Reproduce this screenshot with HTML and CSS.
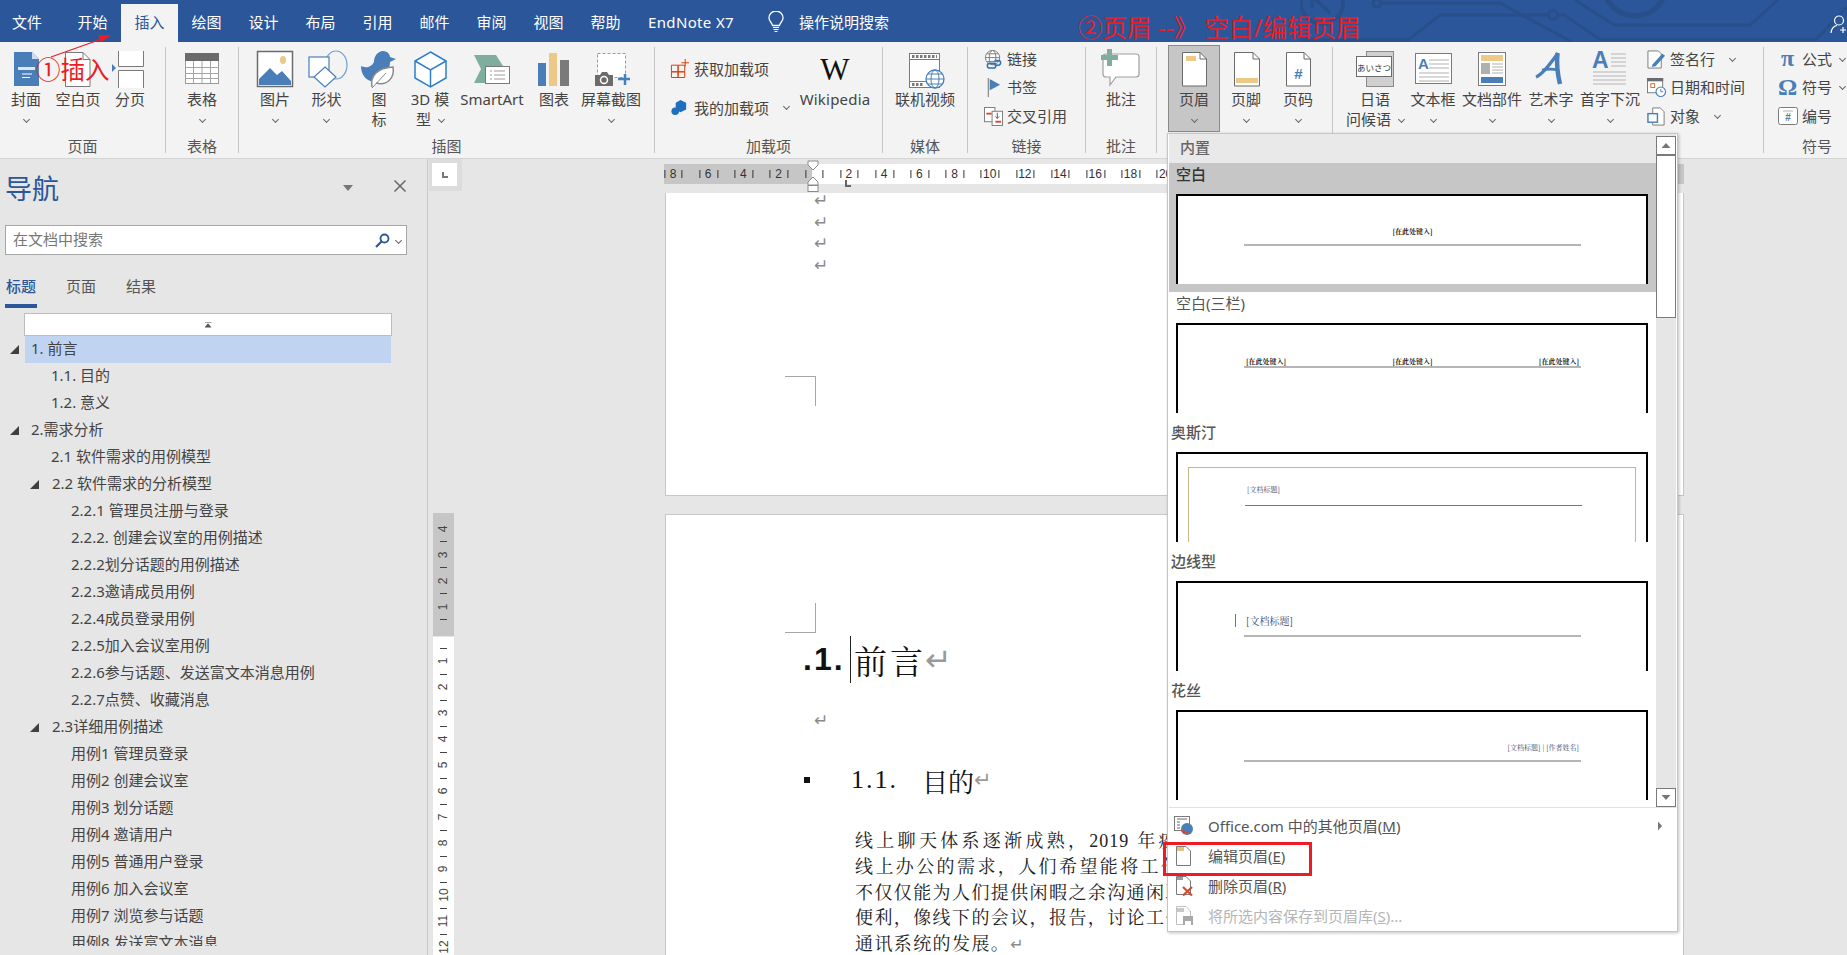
FILE: index.html
```html
<!DOCTYPE html>
<html lang="zh-CN">
<head>
<meta charset="utf-8">
<title>Word</title>
<link rel="stylesheet" href="styles.css">
</head>
<body>
<header class="titlebar">
  <svg class="circuit" viewBox="0 0 547 42"><g fill="none" stroke="#284f89" stroke-width="3"><circle cx="22" cy="3" r="21" stroke-width="4"/><path d="M30 13L14 -2M12 8V-2H22" stroke-width="3.500"/><circle cx="77" cy="3" r="4"/><path d="M81 3H200L272 42"/><path d="M0 40H108L140 15H249"/><circle cx="253" cy="15" r="4.500"/><path d="M258 15H264L300 39.500H516L547 7"/><path d="M275 0L314 25H450L478 0"/><circle cx="335" cy="-15" r="31" stroke-width="5.500"/></g></svg>
  <nav class="tabs">
    <div class="tab tab-file">文件</div><div class="tab">开始</div><div class="tab tab-active">插入</div><div class="tab">绘图</div><div class="tab">设计</div><div class="tab">布局</div><div class="tab">引用</div><div class="tab">邮件</div><div class="tab">审阅</div><div class="tab">视图</div><div class="tab">帮助</div>
    <div class="tab tab-endnote">EndNote X7</div>
    <svg class="bulb" viewBox="0 0 18 22"><path d="M5.500 14.500C5 11.500 2 10.500 2 7A7 7 0 0 1 16 7C16 10.500 13 11.500 12.500 14.500Z" fill="none" stroke="#fff" stroke-width="1.300"/><path d="M6 16.500H12M6.500 18.500H11.500M7.500 20.500H10.500" stroke="#fff" stroke-width="1.200"/></svg>
    <div class="tell">操作说明搜索</div>
  </nav>
  <svg class="user" viewBox="0 0 18 19"><circle cx="9" cy="5.500" r="4.500" fill="none" stroke="#fff" stroke-width="1.200"/><path d="M1 18C1.500 13 4 11 7 10.500M13 12V18M10 15H16" fill="none" stroke="#fff" stroke-width="1.200"/></svg>
</header>

<section class="ribbon">
  <div class="group g-page">
    <div class="gbody pad-0">
      <div class="big w52"><svg viewBox="0 0 44 40"><path d="M10 2H28L35 9V36H10Z" fill="#4a7eb9"/><path d="M28 2V9H35Z" fill="#cfdcec"/><path d="M14 17H31V20H14Z" fill="#dfe8f2"/><path d="M18 24H28M18 27.500H26" stroke="#fff"/></svg><div class="lbl">封面<br><span class="chev"></span></div></div>
      <div class="big w52"><svg viewBox="0 0 44 40"><path d="M9.500 2.500H27L34 9.500V36.500H9.500Z" fill="#fff" stroke="#7a7a7a"/><path d="M27 2.500V9.500H34" fill="none" stroke="#7a7a7a"/></svg><div class="lbl">空白页</div></div>
      <div class="big w52"><svg viewBox="0 0 44 40"><path d="M10.500 1V16.500H35.500V1" fill="#fff" stroke="#7a7a7a"/><path d="M10.500 38V20.500H35.500V38" fill="#fff" stroke="#7a7a7a"/><path d="M4 14L8 18L4 22Z" fill="#4a7eb9"/></svg><div class="lbl">分页</div></div>
    </div>
    <div class="glabel">页面</div>
  </div>
  <div class="group g-table">
    <div class="gbody">
      <div class="big w-full"><svg viewBox="0 0 44 40"><rect x="5.500" y="3.500" width="33" height="30" fill="#fff" stroke="#9a9a9a"/><rect x="5" y="3" width="34" height="8" fill="#6b6b6b"/><path d="M5 17.500H39M5 23.500H39M5 28.500H39M13.500 11V33M22 11V33M30.500 11V33" stroke="#a5a5a5"/></svg><div class="lbl">表格<br><span class="chev"></span></div></div>
    </div>
    <div class="glabel">表格</div>
  </div>
  <div class="group g-illus">
    <div class="gbody pad-10">
      <div class="big w52"><svg viewBox="0 0 44 40"><rect x="4.500" y="1.500" width="35" height="35" fill="#fff" stroke="#6b6b6b" stroke-width="1.500"/><path d="M6 35V29L17 18L24 25L29 21L38 31V35Z" fill="#4a7eb9"/><ellipse cx="30" cy="10" rx="3" ry="4" fill="#edc987"/></svg><div class="lbl">图片<br><span class="chev"></span></div></div>
      <div class="big w51"><svg viewBox="0 0 44 40"><ellipse cx="31" cy="15" rx="11" ry="14" fill="none" stroke="#6f9fd0" stroke-width="1.200"/><rect x="4" y="7" width="20" height="20" fill="#fff" stroke="#4a7eb9" stroke-width="1.200"/><path d="M20 17L31 27L20 37L9 27Z" fill="#fff" stroke="#4a7eb9" stroke-width="1.200"/></svg><div class="lbl">形状<br><span class="chev"></span></div></div>
      <div class="big w54"><svg viewBox="0 0 44 40"><path d="M4 16C8 18 14 18 17 12C17 6 21 1 26 1C31 1 33 5 33 7L39 9L33 12C33 18 30 24 24 26L16 32C8 30 4 24 4 16Z" fill="#4a7eb9"/><path d="M15 37C13 26 20 18 36 17C38 28 30 36 19 33" fill="#fff" stroke="#8a8a8a" stroke-width="1.500"/><path d="M15 38L29 23" stroke="#8a8a8a"/></svg><div class="lbl">图<br>标</div></div>
      <div class="big w48"><svg viewBox="0 0 44 40"><path d="M22.500 2L38 11V28L22.500 37L7 28V11Z" fill="#fff" stroke="#2f7fc8" stroke-width="1.500"/><path d="M7 11L22.500 20L38 11M22.500 20V37" fill="none" stroke="#2f7fc8" stroke-width="1.500"/></svg><div class="lbl">3D 模<br>型<span class="chev chev-in"></span></div></div>
      <div class="big w76"><svg viewBox="0 0 44 40"><path d="M4 5H26L33 16H15V33H4L11 19Z" fill="#7fae9f"/><rect x="15.500" y="16.500" width="24" height="17" fill="#fff" stroke="#7a7a7a"/><path d="M20 21H22M24 21H35M20 25H22M24 25H35M20 29H22M24 29H35" stroke="#9a9a9a"/></svg><div class="lbl">SmartArt</div></div>
      <div class="big w48"><svg viewBox="0 0 44 40"><rect x="6" y="13" width="8" height="23" fill="#4a7eb9"/><rect x="17" y="3" width="8" height="33" fill="#edc987"/><rect x="28" y="10" width="9" height="26" fill="#7a7a7a"/></svg><div class="lbl">图表</div></div>
      <div class="big w66"><svg viewBox="0 0 44 40"><rect x="8.500" y="3.500" width="28" height="24" fill="#fff" stroke="#9a9a9a" stroke-dasharray="3 2"/><path d="M6 25H11L13 22H18L20 25H24V36H6Z" fill="#6b6b6b"/><circle cx="15" cy="30" r="3.500" fill="none" stroke="#fff" stroke-width="1.500"/><path d="M29 29H41M36 24V35" stroke="#4a7eb9" stroke-width="2.500"/></svg><div class="lbl">屏幕截图<br><span class="chev"></span></div></div>
    </div>
    <div class="glabel">插图</div>
  </div>
  <div class="group g-addin">
    <div class="gbody pad-15">
      <div class="addin-col">
        <div class="addin-row"><svg class="sm" viewBox="0 0 20 20"><path d="M1.500 6.500H8.500V13.500H1.500ZM8.500 6.500H15.500V13.500H8.500ZM1.500 13.500H8.500V19.500H1.500ZM8.500 13.500H15.500V19.500H8.500Z" fill="none" stroke="#d83b01"/><path d="M16 0V8M12 4H20" stroke="#d83b01"/></svg><span>获取加载项</span></div>
        <div class="addin-row"><svg class="sm" viewBox="0 0 20 20"><path d="M11 2L17 5V12L11 15L6 12V5Z" fill="#1f6fc1"/><circle cx="5.500" cy="14" r="4" fill="#1f6fc1"/></svg><span>我的加载项</span><span class="chev chev-side"></span></div>
      </div>
      <div class="big w72"><div class="wiki">W</div><div class="lbl lbl-wiki">Wikipedia</div></div>
    </div>
    <div class="glabel">加载项</div>
  </div>
  <div class="group g-media">
    <div class="gbody">
      <div class="big w-full"><svg viewBox="0 0 44 40"><rect x="6.500" y="3.500" width="30" height="34" fill="#fff" stroke="#7a7a7a"/><path d="M6.500 9.500H36.500M6.500 31.500H36.500" stroke="#7a7a7a"/><path d="M9 6.500H34M9 34.500H20" stroke="#7a7a7a" stroke-width="3" stroke-dasharray="2.500 1.500"/><circle cx="32" cy="29" r="9" fill="#fff" stroke="#4a7eb9" stroke-width="1.300"/><ellipse cx="32" cy="29" rx="4" ry="9" fill="none" stroke="#4a7eb9"/><path d="M23 29H41M25 24H39M25 34H39" stroke="#4a7eb9"/></svg><div class="lbl">联机视频</div></div>
    </div>
    <div class="glabel">媒体</div>
  </div>
  <div class="group g-links">
    <div class="gbody pad-16">
      <div class="smalls">
        <div class="srow"><svg class="sm" viewBox="0 0 20 20"><circle cx="9" cy="8" r="7.500" fill="#fff" stroke="#7a7a7a"/><ellipse cx="9" cy="8" rx="3.500" ry="7.500" fill="none" stroke="#7a7a7a"/><path d="M1.500 8H16.500M3 4H15M3 12H15" stroke="#7a7a7a"/><path d="M6 14H10A2.500 2.500 0 0 1 10 19H6A2.500 2.500 0 0 1 6 14ZM11 11H15A2.500 2.500 0 0 1 15 16H11" fill="none" stroke="#2e75b6" stroke-width="1.600"/></svg><span>链接</span></div>
        <div class="srow"><svg class="sm" viewBox="0 0 20 20"><path d="M4.500 0V20" stroke="#6b6b6b"/><path d="M6 1L17 7L6 13Z" fill="#4a7eb9"/></svg><span>书签</span></div>
        <div class="srow"><svg class="sm" viewBox="0 0 20 20"><rect x="0.500" y="0.500" width="11" height="15" fill="#fff" stroke="#7a7a7a"/><rect x="8.500" y="4.500" width="11" height="15" fill="#fff" stroke="#7a7a7a"/><path d="M2.500 7H8" stroke="#d8482a" stroke-width="2"/><path d="M12 15.500H18" stroke="#d8482a" stroke-width="2"/><path d="M14 6V12M12 10L14 12L16 10" fill="none" stroke="#555"/></svg><span>交叉引用</span></div>
      </div>
    </div>
    <div class="glabel">链接</div>
  </div>
  <div class="group g-comment">
    <div class="gbody">
      <div class="big w-full"><svg viewBox="0 0 44 40"><path d="M7 4H37Q40 4 40 7V24Q40 27 37 27H17L11 35V27H7Q4 27 4 24V7Q4 4 7 4Z" fill="#fff" stroke="#a0a0a0" stroke-width="1.200"/><path d="M10.500 -1V16M2 7.500H19" stroke="#7fae9f" stroke-width="5"/></svg><div class="lbl">批注</div></div>
    </div>
    <div class="glabel">批注</div>
  </div>
  <div class="group g-header">
    <div class="gbody pad-11">
      <div class="big w52 big-active"><svg viewBox="0 0 44 40"><path d="M10.500 2.500H28L34.500 9V36H10.500Z" fill="#fff" stroke="#6b6b6b"/><path d="M28 2.500V9H34.500" fill="none" stroke="#6b6b6b"/><rect x="14" y="6" width="10" height="5" fill="#edc987"/></svg><div class="lbl">页眉<br><span class="chev"></span></div></div>
      <div class="big w52"><svg viewBox="0 0 44 40"><path d="M10.500 2.500H29L35.500 9V36H10.500Z" fill="#fff" stroke="#6b6b6b"/><path d="M29 2.500V9H35.500" fill="none" stroke="#6b6b6b"/><rect x="12" y="28" width="22" height="5" fill="#edc987"/></svg><div class="lbl">页脚<br><span class="chev"></span></div></div>
      <div class="big w52"><svg viewBox="0 0 44 40"><path d="M10.500 2.500H28L34.500 9V36H10.500Z" fill="#fff" stroke="#6b6b6b"/><path d="M28 2.500V9H34.500" fill="none" stroke="#6b6b6b"/><text x="22.500" y="29" class="ic-hash">#</text></svg><div class="lbl">页码<br><span class="chev"></span></div></div>
    </div>
  </div>
  <div class="group g-text">
    <div class="gbody pad-13">
      <div class="big w58"><svg viewBox="0 0 44 40"><rect x="13.500" y="1.500" width="27" height="35" fill="#d0d0d0" stroke="#8a8a8a"/><rect x="3.500" y="6.500" width="35" height="20" fill="#fff" stroke="#6b6b6b"/><text x="21" y="20.500" class="ic-jp">あいさつ</text></svg><div class="lbl">日语<br>问候语<span class="chev chev-in"></span></div></div>
      <div class="big w58"><svg viewBox="0 0 44 40"><rect x="4.500" y="3.500" width="36" height="30" fill="#fff" stroke="#7a7a7a"/><text x="7" y="19" class="ic-a">A</text><path d="M18 10H38M18 14H38M18 18H38M8 23H38M8 27H38M8 31H38" stroke="#b0b0b0"/></svg><div class="lbl">文本框<br><span class="chev"></span></div></div>
      <div class="big w60"><svg viewBox="0 0 44 40"><rect x="8.500" y="2.500" width="27" height="33" fill="#fff" stroke="#7a7a7a"/><rect x="11" y="5" width="22" height="6" fill="#edc987"/><rect x="11" y="13" width="9" height="11" fill="#b0b0b0"/><path d="M22 14H33M22 17H33M22 20H33M22 23H33" stroke="#b0b0b0"/><rect x="11" y="27" width="22" height="6" fill="#4a7eb9"/></svg><div class="lbl">文档部件<br><span class="chev"></span></div></div>
      <div class="big w58"><svg viewBox="0 0 44 40"><g fill="none" stroke="#4a7eb9"><path d="M7 27C12 25 22 13 29 3" stroke-width="3.200"/><path d="M28.500 3C27.500 12 28.500 24 31 34" stroke-width="4.500"/><path d="M13 20C18 19 24 19 29 20" stroke-width="2.800"/></g></svg><div class="lbl">艺术字<br><span class="chev"></span></div></div>
      <div class="big w60"><svg viewBox="0 0 44 40"><text x="4" y="18" class="ic-drop">A</text><path d="M23 4H38M23 8H38M23 12H38M23 16H38M5 22H38M5 26H38M5 30H38M5 34H38" stroke="#b5b5b5"/></svg><div class="lbl">首字下沉<br><span class="chev"></span></div></div>
      <div class="smalls smalls-text">
        <div class="srow"><svg class="sm" viewBox="0 0 20 20"><path d="M1 1H12L15 4V19H1Z" fill="#fff" stroke="#7a7a7a"/><path d="M6 15L16 4L19 6L9 17L5 18Z" fill="#4a7eb9"/></svg><span>签名行</span><span class="chev chev-a"></span></div>
        <div class="srow"><svg class="sm" viewBox="0 0 20 20"><rect x="0.500" y="0.500" width="16" height="15" fill="#fff" stroke="#7a7a7a"/><rect x="0" y="0" width="17" height="3.500" fill="#6b6b6b"/><rect x="4" y="6" width="4" height="4" fill="none" stroke="#d8682a"/><circle cx="14.500" cy="14.500" r="5" fill="#fff" stroke="#4a7eb9" stroke-width="1.200"/><path d="M14.500 11.500V14.500H17" fill="none" stroke="#4a7eb9"/></svg><span>日期和时间</span></div>
        <div class="srow"><svg class="sm" viewBox="0 0 20 20"><path d="M6 1H14L18 5V19H6Z" fill="#fff" stroke="#7a7a7a"/><rect x="1" y="7" width="10" height="9" fill="#fff" stroke="#4a7eb9" stroke-width="1.500"/></svg><span>对象</span><span class="chev chev-b"></span></div>
      </div>
    </div>
  </div>
  <div class="group g-symbol">
    <div class="gbody pad-14">
      <div class="smalls">
        <div class="srow"><span class="sym">π</span><span>公式</span><span class="chev chev-c"></span></div>
        <div class="srow"><span class="sym">Ω</span><span>符号</span><span class="chev chev-c"></span></div>
        <div class="srow"><svg class="sm sm-num" viewBox="0 0 20 18"><rect x="0.500" y="0.500" width="19" height="17" rx="2" fill="#fff" stroke="#7a7a7a"/><path d="M5 4H15" stroke="#b0b0b0"/><text x="10" y="14" class="ic-hash2">#</text></svg><span>编号</span></div>
      </div>
    </div>
    <div class="glabel glabel-sym">符号</div>
  </div>
</section>

<main class="workspace">
  <aside class="nav">
    <div class="nav-head"><h1 class="nav-title">导航</h1><span class="nav-drop"></span><svg class="nav-x" viewBox="0 0 12 12"><path d="M0.500 0.500L11.500 11.500M11.500 0.500L0.500 11.500" stroke="#666" stroke-width="1.500"/></svg></div>
    <div class="search"><span class="search-ph">在文档中搜索</span><svg class="search-ic" viewBox="0 0 15 15"><circle cx="9.500" cy="5.500" r="4" fill="none" stroke="#2b579a" stroke-width="1.800"/><path d="M6.500 8.500L1 14" stroke="#2b579a" stroke-width="2.200"/></svg><span class="chev chev-s"></span></div>
    <div class="nav-tabs"><div class="ntab ntab-on">标题</div><div class="ntab">页面</div><div class="ntab">结果</div></div>
    <div class="tree-up"><span class="tree-up-ic"></span></div>
    <div class="tree">
      <div class="row"><span class="slot"><i class="twist"></i></span><div class="rlabel l1 sel">1. 前言</div></div>
      <div class="row"><span class="slot"></span><div class="rlabel l2">1.1. 目的</div></div>
      <div class="row"><span class="slot"></span><div class="rlabel l2">1.2. 意义</div></div>
      <div class="row"><span class="slot"><i class="twist"></i></span><div class="rlabel l1">2.需求分析</div></div>
      <div class="row"><span class="slot"></span><div class="rlabel l2">2.1 软件需求的用例模型</div></div>
      <div class="row"><span class="slot"></span><div class="rlabel l2t"><i class="twist twist-2"></i>2.2 软件需求的分析模型</div></div>
      <div class="row"><span class="slot"></span><div class="rlabel l3">2.2.1 管理员注册与登录</div></div>
      <div class="row"><span class="slot"></span><div class="rlabel l3">2.2.2. 创建会议室的用例描述</div></div>
      <div class="row"><span class="slot"></span><div class="rlabel l3">2.2.2划分话题的用例描述</div></div>
      <div class="row"><span class="slot"></span><div class="rlabel l3">2.2.3邀请成员用例</div></div>
      <div class="row"><span class="slot"></span><div class="rlabel l3">2.2.4成员登录用例</div></div>
      <div class="row"><span class="slot"></span><div class="rlabel l3">2.2.5加入会议室用例</div></div>
      <div class="row"><span class="slot"></span><div class="rlabel l3">2.2.6参与话题、发送富文本消息用例</div></div>
      <div class="row"><span class="slot"></span><div class="rlabel l3">2.2.7点赞、收藏消息</div></div>
      <div class="row"><span class="slot"></span><div class="rlabel l2t"><i class="twist twist-2"></i>2.3详细用例描述</div></div>
      <div class="row"><span class="slot"></span><div class="rlabel l3">用例1 管理员登录</div></div>
      <div class="row"><span class="slot"></span><div class="rlabel l3">用例2 创建会议室</div></div>
      <div class="row"><span class="slot"></span><div class="rlabel l3">用例3 划分话题</div></div>
      <div class="row"><span class="slot"></span><div class="rlabel l3">用例4 邀请用户</div></div>
      <div class="row"><span class="slot"></span><div class="rlabel l3">用例5 普通用户登录</div></div>
      <div class="row"><span class="slot"></span><div class="rlabel l3">用例6 加入会议室</div></div>
      <div class="row"><span class="slot"></span><div class="rlabel l3">用例7 浏览参与话题</div></div>
      <div class="row"><span class="slot"></span><div class="rlabel l3">用例8 发送富文本消息</div></div>
    </div>
  </aside>

  <div class="vcol">
    <div class="corner"><div class="corner-in"><span class="corner-l"></span></div></div>
    <div class="vruler">
      <div class="vgrey"><div class="vc"><span>4</span></div><div class="vc"><span>3</span></div><div class="vc"><span>2</span></div><div class="vc"><span>1</span></div></div>
      <div class="vwhite"><div class="vw"><span>1</span></div><div class="vw"><span>2</span></div><div class="vw"><span>3</span></div><div class="vw"><span>4</span></div><div class="vw"><span>5</span></div><div class="vw"><span>6</span></div><div class="vw"><span>7</span></div><div class="vw"><span>8</span></div><div class="vw"><span>9</span></div><div class="vw"><span>10</span></div><div class="vw"><span>11</span></div><div class="vw"><span>12</span></div></div>
    </div>
  </div>

  <div class="pages">
    <div class="hruler">
      <div class="hr-track"><div class="hc">8</div><div class="hc">6</div><div class="hc">4</div><div class="hc">2</div><div class="hc"></div><div class="hc">2</div><div class="hc">4</div><div class="hc">6</div><div class="hc">8</div><div class="hc">10</div><div class="hc">12</div><div class="hc">14</div><div class="hc">16</div><div class="hc">18</div><div class="hc">20</div><div class="hc">22</div><div class="hc">24</div><div class="hc">26</div><div class="hc">28</div><div class="hc">30</div><div class="hc">32</div><div class="hc">34</div><div class="hc">36</div><div class="hc">38</div><div class="hc">40</div><div class="hc">42</div><div class="hc">44</div><div class="hc">46</div></div>
      <svg class="indent" viewBox="0 0 12 33"><path d="M1 1H11V5L6 10L1 5Z" fill="#fff" stroke="#8a8a8a"/><path d="M6 17L11 22V25H1V22Z" fill="#fff" stroke="#8a8a8a"/><rect x="1" y="25.500" width="10" height="6" fill="#fff" stroke="#8a8a8a"/></svg>
      <span class="tabstop"></span>
    </div>
    <div class="page page-1">
      <div class="mark">↵</div><div class="mark">↵</div><div class="mark">↵</div><div class="mark">↵</div>
      <div class="crop crop-top"></div>
    </div>
    <div class="page page-2">
      <div class="crop crop-bottom"></div>
      <div class="h1"><span class="h1-num">.1.</span><span class="caret"></span><span class="h1-txt">前言</span><span class="mark-big">↵</span></div>
      <div class="mark mark-2">↵</div>
      <div class="h2"><span class="h2-bullet"></span><span class="h2-num">1.1.</span><span class="h2-txt">目的</span><span class="mark-mid">↵</span></div>
      <div class="para">
        <p class="p-wide">线上聊天体系逐渐成熟，<span class="digits">2019</span> 年疫情以来</p>
        <p class="p-mid">线上办公的需求，人们希望能将工作与</p>
        <p>不仅仅能为人们提供闲暇之余沟通闲聊</p>
        <p>便利，像线下的会议，报告，讨论工作</p>
        <p>通讯系统的发展。<span class="mark-inl">↵</span></p>
      </div>
    </div>
  </div>
</main>

<div class="popup">
  <div class="pop-top">
    <div class="gal">
      <div class="gal-head">内置</div>
      <div class="gal-item gal-sel">
        <div class="gal-name gal-name-b">空白</div>
        <div class="pv"><div class="hd hd-a"><span>[在此处键入]</span></div></div>
      </div>
      <div class="gal-item">
        <div class="gal-name">空白(三栏)</div>
        <div class="pv"><div class="hd hd-b"><span>[在此处键入]</span><span>[在此处键入]</span><span>[在此处键入]</span></div></div>
      </div>
      <div class="gal-item">
        <div class="gal-name gal-name-l">奥斯汀</div>
        <div class="pv"><div class="frame"><div class="hd hd-c"><span>[文档标题]</span></div></div></div>
      </div>
      <div class="gal-item">
        <div class="gal-name gal-name-l">边线型</div>
        <div class="pv"><div class="hd hd-d"><i class="hd-bar"></i><span>[文档标题]</span></div></div>
      </div>
      <div class="gal-item">
        <div class="gal-name gal-name-l">花丝</div>
        <div class="pv"><div class="hd hd-e"><span>[文档标题] | [作者姓名]</span></div></div>
      </div>
    </div>
    <div class="sb">
      <div class="sb-btn"><i class="tri-up"></i></div>
      <div class="sb-thumb"></div>
      <div class="sb-fill"></div>
      <div class="sb-btn"><i class="tri-down"></i></div>
    </div>
  </div>
  <div class="pop-menu">
    <div class="mi"><svg class="mi-ic" viewBox="0 0 20 20"><rect x="0.500" y="0.500" width="15" height="14" fill="#fff" stroke="#7a7a7a"/><path d="M3 3H13M3 6H6M3 9H6M3 12H6" stroke="#9a9a9a" stroke-width="1.500"/><circle cx="13" cy="13" r="6" fill="#4a7eb9"/><path d="M7 15C10 19 14 18 16 15C14 16 10 16 9 13Z" fill="#d8482a"/></svg><span>Office.com 中的其他页眉(<u>M</u>)</span><i class="mi-arrow"></i></div>
    <div class="mi"><svg class="mi-ic" viewBox="0 0 20 20"><path d="M2.500 0.500H12L16.500 5V19.500H2.500Z" fill="#fff" stroke="#7a7a7a"/><rect x="3" y="1" width="7" height="4" fill="#e6c27f"/></svg><span>编辑页眉(<u>E</u>)</span></div>
    <div class="mi"><svg class="mi-ic" viewBox="0 0 20 20"><path d="M2.500 0.500H12L16.500 5V18.500H2.500Z" fill="#fff" stroke="#7a7a7a"/><rect x="3" y="1" width="6" height="3" fill="#9a9a9a"/><path d="M9 11L18 19.500M18 11L9 19.500" stroke="#d8482a" stroke-width="2.200"/></svg><span>删除页眉(<u>R</u>)</span></div>
    <div class="mi mi-off"><svg class="mi-ic" viewBox="0 0 20 20"><path d="M2.500 0.500H12L16.500 5V18.500H2.500Z" fill="#fff" stroke="#c0c0c0"/><rect x="3" y="2" width="7" height="4" fill="#c8c8c8"/><rect x="9" y="10" width="10" height="9" fill="#a8a8a8"/><rect x="11" y="15" width="6" height="4" fill="#fff"/></svg><span>将所选内容保存到页眉库(<u>S</u>)...</span></div>
  </div>
</div>

<div class="redbox"></div>
<div class="note note-1">①插入</div>
<div class="note note-2">②页眉 --》 空白/编辑页眉</div>
<svg class="note-arrow" viewBox="0 0 70 30"><path d="M1 29L60 8" stroke="#ed1c24" stroke-width="1.300"/><path d="M61 7.500L48 7L51 14Z" fill="#ed1c24"/></svg>
</body>
</html>
```

FILE: styles.css
```css
* { box-sizing: border-box; }
html, body { margin: 0; padding: 0; }
body {
  width: 1847px; height: 955px; overflow: hidden; position: relative;
  display: flex; flex-direction: column; background: #e6e6e6;
  font-family: "Noto Sans", "Noto Sans CJK SC", sans-serif; font-size: 15px; color: #444;
}
/* title bar */
.titlebar { height: 42px; flex: none; background: #2b579a; position: relative; overflow: hidden; }
.circuit { position: absolute; left: 1300px; top: 0; width: 547px; height: 42px; overflow: hidden; }
.tabs { display: flex; position: relative; height: 42px; padding-top: 4px; color: #fff; }
.tab { width: 57px; height: 38px; line-height: 36px; text-align: center; flex: none; }
.tab-file { width: 54px; margin-right: 10px; }
.tab-active { background: #f3f3f3; color: #2b579a; }
.tab-endnote { width: auto; margin-left: 14px; letter-spacing: 0.350px; }
.bulb { width: 18px; height: 22px; margin: 7px 14px 0 33px; flex: none; }
.tell { line-height: 36px; }
.user { position: absolute; left: 1830px; top: 15px; width: 18px; height: 19px; }

/* ribbon */
.ribbon { height: 117px; flex: none; background: #f3f3f3; border-bottom: 1px solid #d4d4d4; display: flex; }
.group { height: 106px; margin-top: 5px; border-right: 1px solid #c6c6c6; flex: none; }
.g-page { width: 166px; } .g-table { width: 73px; } .g-illus { width: 416px; } .g-addin { width: 228px; }
.g-media { width: 85px; } .g-links { width: 118px; } .g-comment { width: 71px; } .g-header { width: 176px; }
.g-text { width: 431px; } .g-symbol { width: 84px; border-right: 0; }
.gbody { height: 90px; display: flex; }
.pad-10 { padding-left: 10px; } .pad-11 { padding-left: 11px; } .pad-13 { padding-left: 13px; }
.pad-14 { padding-left: 14px; } .pad-15 { padding-left: 15px; } .pad-16 { padding-left: 16px; }
.glabel { text-align: center; line-height: 18px; color: #555; }
.glabel-sym { padding-left: 22px; }
.big { padding-top: 3px; flex: none; text-align: center; }
.big svg { display: block; width: 44px; height: 40px; margin: 0 auto; overflow: visible; }
.w-full { width: 100%; } .w48 { width: 48px; } .w51 { width: 51px; } .w52 { width: 52px; } .w54 { width: 54px; }
.w58 { width: 58px; } .w60 { width: 60px; } .w66 { width: 66px; } .w72 { width: 72px; } .w76 { width: 76px; }
.big-active { background: #c6c6c6; border: 1px solid #8a8a8a; height: 87px; margin-top: -2px; padding-top: 4px; }
.big-active svg { margin-left: 3px; }
.lbl { line-height: 19.500px; white-space: nowrap; }
.lbl-wiki { letter-spacing: 0.200px; }
.chev { display: inline-block; width: 5px; height: 5px; border-right: 1px solid #666; border-bottom: 1px solid #666; transform: rotate(45deg); vertical-align: 3px; }
.chev-in { margin-left: 8px; }
.chev-side { margin-left: 15px; }
.chev-a { margin-left: 15px; } .chev-b { margin-left: 15px; } .chev-c { margin-left: 8px; }
.chev-s { margin-left: 6px; }
.addin-col { width: 129px; flex: none; padding-top: 2px; }
.addin-row { height: 39px; display: flex; align-items: center; }
.addin-row .sm { margin-right: 5px; }
.addin-row .chev { margin-top: -3px; }
.sm { width: 19px; height: 19px; flex: none; margin-right: 4px; overflow: visible; }
.sm-num { height: 18px; width: 20px; }
.wiki { height: 40px; font-family: "Liberation Serif", serif; font-size: 31px; color: #111; line-height: 40px; }
.smalls { flex: none; margin-top: -2px; }
.smalls-text { margin-left: 7px; }
.srow { height: 28.500px; display: flex; align-items: center; white-space: nowrap; }
.srow > span { position: relative; top: -1px; }
.sym { width: 19px; margin-right: 5px; text-align: center; font-family: "Liberation Serif", serif; font-weight: 700; font-size: 24px; color: #4a7eb9; line-height: 24px; }
.ic-hash { font: 700 15px "Liberation Sans", sans-serif; fill: #4a7eb9; text-anchor: middle; }
.ic-hash2 { font: 700 10px "Liberation Sans", sans-serif; fill: #4a7eb9; text-anchor: middle; }
.ic-jp { font: 8.500px "Noto Sans CJK JP", sans-serif; fill: #333; text-anchor: middle; }
.ic-a { font: 700 15px "Liberation Sans", sans-serif; fill: #4a7eb9; }
.ic-drop { font: 700 23px "Liberation Sans", sans-serif; fill: #4a7eb9; }

/* workspace */
.workspace { flex: 1; display: flex; min-height: 0; overflow: hidden; }
.nav { width: 428px; flex: none; border-right: 1px solid #c8c8c8; padding-left: 5px; overflow: hidden; }
.nav-head { height: 66px; display: flex; align-items: flex-start; }
.nav-title { margin: 12px 0 0; font-size: 27px; font-weight: 400; color: #2b579a; line-height: 36px; width: 338px; }
.nav-drop { width: 10px; height: 6px; margin-top: 26px; background: #777; clip-path: polygon(0 0, 100% 0, 50% 100%); }
.nav-x { width: 12px; height: 12px; margin: 21px 0 0 41px; }
.search { width: 402px; height: 30px; background: #fff; border: 1px solid #a6a6a6; display: flex; align-items: center; padding-left: 7px; }
.search-ph { color: #777; width: 362px; flex: none; margin-top: -3px; }
.search-ic { width: 15px; height: 15px; flex: none; }
.nav-tabs { display: flex; height: 53px; padding-top: 19px; }
.ntab { width: 32px; margin-right: 28px; height: 34px; line-height: 24px; text-align: center; color: #555; }
.ntab-on { color: #2b579a; font-weight: 500; border-bottom: 4px solid #2b579a; }
.tree-up { width: 368px; height: 23px; margin: 5px 0 0 19px; background: #fff; border: 1px solid #bdbdbd; display: flex; align-items: center; justify-content: center; }
.tree-up-ic { width: 7px; height: 6px; background: #555; clip-path: polygon(0 0, 100% 0, 100% 15%, 0 15%, 0 0, 50% 30%, 100% 100%, 0 100%, 50% 30%); }
.tree { height: 610px; overflow: hidden; margin-left: -5px; }
.row { height: 27px; display: flex; }
.slot { width: 25px; flex: none; display: flex; align-items: center; padding-left: 10px; }
.rlabel { width: 366px; flex: none; line-height: 25px; white-space: nowrap; display: flex; align-items: flex-start; }
.twist { width: 9px; height: 9px; background: #404040; clip-path: polygon(100% 0, 100% 100%, 0 100%); flex: none; display: block; }
.twist-2 { margin: 9px 13px 0 0; }
.l1 { padding-left: 6px; }
.l2 { padding-left: 26px; }
.l2t { padding-left: 5px; }
.l3 { padding-left: 46px; }
.sel { background: #c0d4f2; }

/* vertical ruler column */
.vcol { width: 236px; flex: none; }
.corner { width: 33px; height: 32px; margin-left: 1px; background: #dcdcdc; padding: 4px 3px; }
.corner-in { width: 25px; height: 23px; background: #fff; display: flex; align-items: center; justify-content: center; }
.corner-l { width: 6px; height: 6px; border-left: 2px solid #777; border-bottom: 2px solid #777; }
.vruler { width: 21px; margin: 322px 0 0 5px; }
.vgrey { height: 123px; background: #c6c6c6; padding-top: 3px; }
.vc { height: 26px; position: relative; display: flex; align-items: center; justify-content: center; font: 12px "Liberation Sans", sans-serif; color: #444; }
.vc span, .vw span { transform: rotate(-90deg); display: block; }
.vc::after { content: ""; position: absolute; left: 7px; bottom: 0; width: 7px; height: 1px; background: #444; }
.vwhite { height: 320px; background: #fff; margin-top: 1px; padding-top: 11px; }
.vw { height: 26px; position: relative; display: flex; align-items: center; justify-content: center; font: 12px "Liberation Sans", sans-serif; color: #444; }
.vw::before { content: ""; position: absolute; left: 7px; top: 0; width: 7px; height: 1px; background: #444; }

/* pages */
.pages { width: 1020px; flex: none; }
.hruler { height: 20px; margin-top: 5px; position: relative; }
.hr-track { height: 20px; overflow: hidden; display: flex; background: linear-gradient(to right, #c6c6c6 148px, #fff 148px, #fff 977px, #c6c6c6 977px); }
.hc { width: 35.200px; flex: none; position: relative; text-align: center; font: 12px/20px "Liberation Sans", sans-serif; color: #333; transform: translateX(-8.600px); }
.hc::before, .hc::after { content: ""; position: absolute; top: 6px; width: 1px; height: 8px; background: #333; }
.hc::before { left: 8.800px; } .hc::after { left: 26.400px; }
.indent { position: absolute; left: 143px; top: -4px; width: 12px; height: 33px; }
.tabstop { position: absolute; left: 181px; top: 16px; width: 6px; height: 7px; border-left: 2px solid #666; border-bottom: 2px solid #666; }
.page { background: #fff; border: 1px solid #c6c6c6; position: relative; margin-left: 1px; width: 1019px; }
.page-1 { height: 303px; margin-top: 9px; border-top: 0; padding-left: 148px; }
.page-2 { height: 460px; margin-top: 18px; padding-left: 137px; }
.mark { height: 21.600px; font: 17px/15px "DejaVu Sans", sans-serif; color: #8a8a8a; }
.crop { width: 31px; height: 30px; border-right: 1px solid #a6a6a6; }
.crop-top { margin: 97px 0 0 -29px; border-top: 1px solid #a6a6a6; }
.crop-bottom { margin: 88px 0 0 -18px; border-bottom: 1px solid #a6a6a6; }
.h1 { height: 47px; margin-top: 3px; display: flex; align-items: center; font-family: "Noto Serif CJK SC", "Noto Sans CJK SC", serif; color: #111; white-space: nowrap; }
.h1-num { width: 47px; font: 700 32px "Liberation Sans", sans-serif; letter-spacing: 2px; }
.caret { width: 1px; height: 47px; background: #222; margin-right: 3px; }
.h1-txt { font-size: 33px; letter-spacing: 3px; width: 71px; }
.mark-big { font: 32px "DejaVu Sans", sans-serif; color: #999; }
.mark-2 { margin: 30px 0 0 11px; height: 22px; }
.h2 { height: 40px; margin-top: 25px; display: flex; align-items: center; font-family: "Noto Serif CJK SC", "Noto Sans CJK SC", serif; color: #111; white-space: nowrap; }
.h2-bullet { width: 6px; height: 6px; background: #111; margin: 0 41px 0 1px; }
.h2-num { width: 71px; font: 26px "Liberation Serif", serif; letter-spacing: 2px; }
.h2-txt { font-size: 26px; width: 52px; }
.mark-mid { font: 21px "DejaVu Sans", sans-serif; color: #999; }
.para { margin: 27px 0 0 52px; font-family: "Noto Serif CJK SC", "Noto Sans CJK SC", serif; color: #222; font-size: 18px; letter-spacing: 1.400px; white-space: nowrap; }
.para p { margin: 0; height: 25.800px; line-height: 25.800px; }
.para .p-wide { letter-spacing: 3.300px; }
.para .p-mid { letter-spacing: 2.400px; }
.digits { font-family: "Liberation Serif", serif; letter-spacing: 1px; }
.mark-inl { font: 16px "DejaVu Sans", sans-serif; color: #8a8a8a; }

/* popup gallery */
.popup { position: absolute; left: 1167px; top: 133px; width: 511px; height: 799px; background: #fff; border: 1px solid #c6c6c6; box-shadow: 1px 1px 3px rgba(0,0,0,.25); display: flex; flex-direction: column; }
.pop-top { height: 673px; display: flex; flex: none; }
.gal { width: 488px; flex: none; overflow: hidden; padding-left: 1px; }
.gal-head { height: 29px; background: #e9e9e9; line-height: 26px; padding-left: 11px; font-weight: 500; color: #666; }
.gal-item { height: 129px; overflow: hidden; }
.gal-sel { background: #c6c6c6; }
.gal-name { height: 24px; line-height: 22px; padding-left: 7px; margin-bottom: 7px; color: #555; }
.gal-name-b { font-weight: 500; color: #333; }
.gal-name-l { padding-left: 2px; font-weight: 500; }
.pv { width: 472px; height: 90px; margin-left: 7px; background: #fff; border: 2px solid #000; border-bottom: 0; overflow: hidden; font-family: "Noto Serif CJK SC", "Noto Sans CJK SC", serif; font-size: 7px; color: #222; }
.hd { width: 337px; margin-left: 66px; border-bottom: 2px solid #b5b5b5; line-height: 16px; font-weight: 700; white-space: nowrap; }
.hd-a { margin-top: 27px; height: 23px; text-align: center; }
.hd-b { margin-top: 29px; height: 14px; line-height: 14px; display: flex; justify-content: space-between; padding: 0 2px; }
.frame { margin: 13px 10px 0; height: 80px; border: 1.500px solid #c4b98c; border-bottom: 0; }
.hd-c { margin: 13px 0 0 56px; height: 25px; border-bottom: 1px solid #777; padding-left: 2px; color: #3b4a6b; font-weight: 400; }
.hd-d { margin-top: 30px; height: 24px; padding-left: 2px; font-size: 10px; position: relative; color: #3b4a6b; font-weight: 400; }
.hd-bar { position: absolute; left: -9px; top: 1px; width: 1px; height: 13px; background: #4a7eb9; }
.hd-e { margin-top: 27px; height: 23px; text-align: right; padding-right: 2px; color: #3b4a6b; font-weight: 400; }
.sb { width: 20px; background: #e6e6e6; display: flex; flex-direction: column; padding-top: 2px; flex: none; }
.sb-btn { height: 19px; background: #fff; border: 1px solid #7a7a7a; display: flex; align-items: center; justify-content: center; flex: none; }
.sb-thumb { height: 163px; background: #fff; border: 1px solid #7a7a7a; flex: none; }
.sb-fill { flex: 1; }
.tri-up { width: 9px; height: 5px; background: #777; clip-path: polygon(50% 0, 100% 100%, 0 100%); display: block; }
.tri-down { width: 9px; height: 5px; background: #777; clip-path: polygon(0 0, 100% 0, 50% 100%); display: block; }
.pop-menu { margin-left: 1px; border-top: 1px solid #e1e1e1; padding-top: 3px; flex: 1; }
.mi { height: 30px; display: flex; align-items: center; padding-left: 5px; color: #555; position: relative; }
.mi > span { position: relative; top: -1px; }
.mi-ic { width: 20px; height: 20px; margin-right: 14px; flex: none; overflow: visible; }
.mi-off { color: #b5b5b5; }
.mi-arrow { margin-left: auto; margin-right: 15px; width: 4px; height: 9px; background: #777; clip-path: polygon(0 0, 100% 50%, 0 100%); display: block; }

/* red annotations */
.redbox { position: absolute; left: 1163px; top: 842px; width: 149px; height: 34px; border: 3px solid #ed1c24; }
.note { position: absolute; color: #ed1c24; font-size: 24.500px; line-height: 28px; white-space: nowrap; }
.note-1 { left: 36px; top: 56px; }
.note-2 { left: 1078px; top: 14px; }
.note-arrow { position: absolute; left: 50px; top: 28px; width: 70px; height: 30px; overflow: visible; }
```
